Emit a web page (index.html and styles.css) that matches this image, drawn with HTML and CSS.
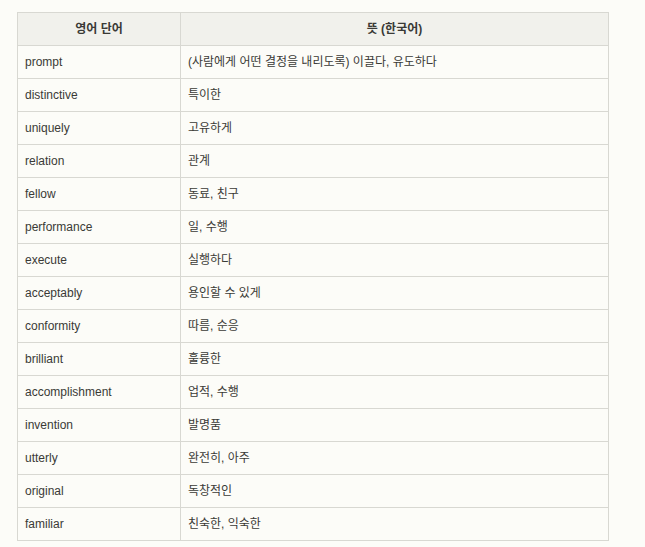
FILE: index.html
```html
<!DOCTYPE html>
<html lang="ko">
<head>
<meta charset="utf-8">
<link rel="stylesheet" href="styles.css">
</head>
<body>
<div class="wrap">
<table class="vocab">
<thead>
<tr><th class="c1">영어 단어</th><th class="c2">뜻 (한국어)</th></tr>
</thead>
<tbody>
<tr><td>prompt</td><td>(사람에게 어떤 결정을 내리도록) 이끌다, 유도하다</td></tr>
<tr><td>distinctive</td><td>특이한</td></tr>
<tr><td>uniquely</td><td>고유하게</td></tr>
<tr><td>relation</td><td>관계</td></tr>
<tr><td>fellow</td><td>동료, 친구</td></tr>
<tr><td>performance</td><td>일, 수행</td></tr>
<tr><td>execute</td><td>실행하다</td></tr>
<tr><td>acceptably</td><td>용인할 수 있게</td></tr>
<tr><td>conformity</td><td>따름, 순응</td></tr>
<tr><td>brilliant</td><td>훌륭한</td></tr>
<tr><td>accomplishment</td><td>업적, 수행</td></tr>
<tr><td>invention</td><td>발명품</td></tr>
<tr><td>utterly</td><td>완전히, 아주</td></tr>
<tr><td>original</td><td>독창적인</td></tr>
<tr><td>familiar</td><td>친숙한, 익숙한</td></tr>
</tbody>
</table>
</div>
</body>
</html>
```
FILE: styles.css
```css
html, body {
  margin: 0;
  padding: 0;
  background: #fcfcf8;
}
.wrap {
  padding: 12px 0 0 17px;
}
.vocab {
  border-collapse: collapse;
  width: 592px;
  font-family: "Liberation Sans", Arial, "Noto Sans CJK KR", sans-serif;
  font-size: 12px;
  line-height: 16px;
  color: #3a3a36;
}
.vocab th, .vocab td {
  border: 1px solid #d8d8d2;
  height: 31px;
  padding: 0 7px 1px;
  text-align: left;
  vertical-align: middle;
}
.vocab th {
  background: #f1f1ec;
  font-weight: 600;
  text-align: center;
}
.vocab .c1 {
  width: 148px;
}
```
